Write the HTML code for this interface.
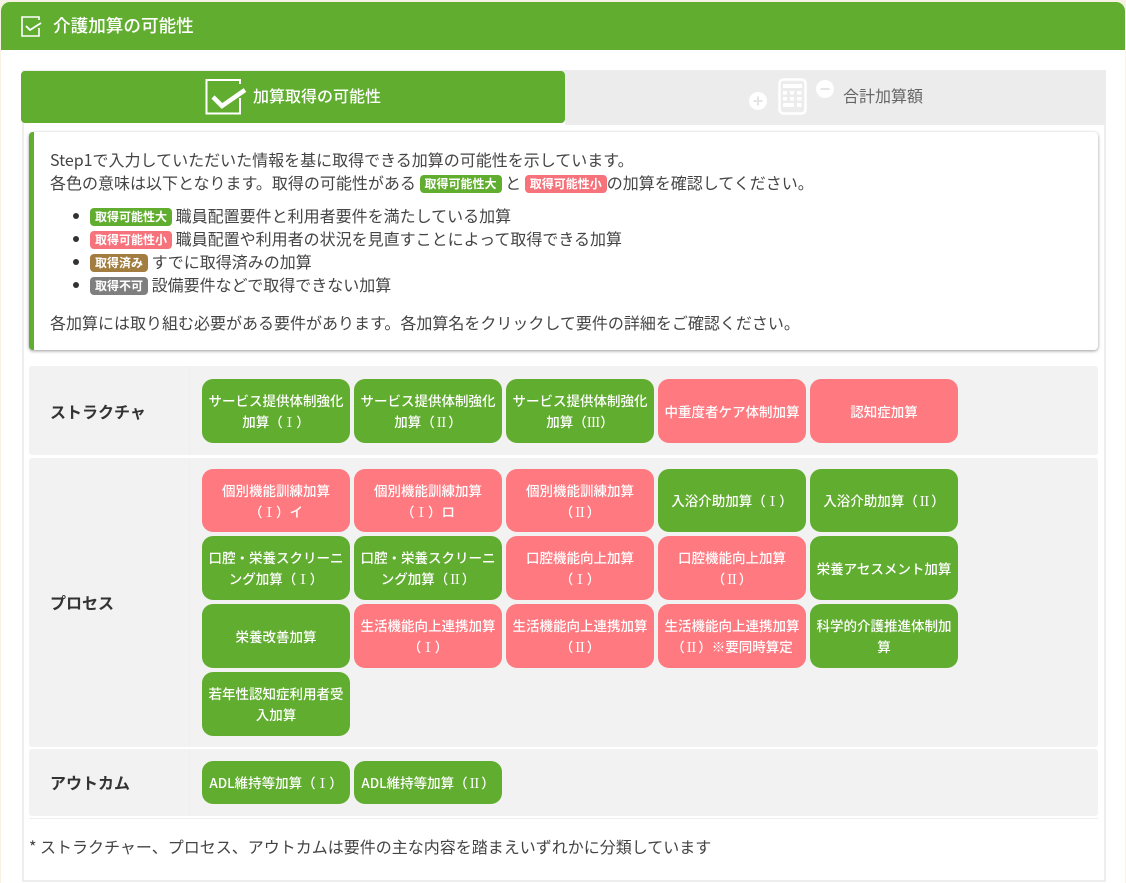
<!DOCTYPE html>
<html lang="ja"><head><meta charset="utf-8"><title>介護加算の可能性</title>
<style>
*{box-sizing:border-box}
html,body{margin:0;padding:0;width:1126px;height:883px;overflow:hidden;background:#f6f2e4}
body{position:relative;font-family:"Noto Sans CJK JP","Liberation Sans",sans-serif;color:#3c3c3c}
.a{position:absolute}
#main{left:1px;top:2px;width:1124px;height:881px;background:#fff;border-radius:9px 9px 0 0}
#hd{left:1px;top:2px;width:1124px;height:48px;background:#61ad30;border-radius:9px 9px 0 0}
#panel{left:22px;top:70px;width:1084px;height:812px;border:2px solid #eee;background:#fff}
.t{position:absolute;white-space:nowrap;font-size:16px;line-height:23px;color:#444}
.row{position:absolute;left:29px;width:1069px;background:#f2f2f2;border-radius:3px}
.row i{position:absolute;left:160px;top:0;bottom:0;width:1px;background:#efefef}
.lb{position:absolute;left:50px;font-size:16px;font-weight:700;color:#333;line-height:24px;white-space:nowrap}
.b{position:absolute;width:148px;border-radius:11px;color:#fff;font-size:13.5px;line-height:21px;display:flex;align-items:center;justify-content:center;text-align:center;padding:0 6px;font-weight:500}
.b span{display:block}
.b s{text-decoration:none;font-family:"Noto Serif CJK SC",serif}
.g{background:#61ad30}.r{background:#ff7981}
.tg{display:inline-block;font-size:12px;font-weight:700;color:#fff;line-height:18px;height:18px;padding:0 5px;border-radius:4px;vertical-align:1px}
.tg.g{background:#61ad30}.tg.r{background:#f6737c}.tg.br{background:#a27d3f}.tg.gy{background:#7f7f7f}
.dot{position:absolute;left:73px;width:6px;height:6px;border-radius:50%;background:#333}
</style></head><body>
<div class="a" id="main"></div>
<div class="a" id="hd"></div>
<svg class="a" style="left:20px;top:15px" width="24" height="24" viewBox="0 0 24 24" fill="none" stroke="#fff" stroke-width="1.6"><path d="M19 13v8H2V2h17v3"/><path d="M6 11l4 4 11-7" stroke-width="1.8"/></svg>
<div class="a" style="left:53px;top:13px;font-size:17.6px;line-height:26px;color:#fff;font-weight:500;white-space:nowrap">介護加算の可能性</div>

<div class="a" id="panel"></div>
<div class="a" style="left:565px;top:70px;width:541px;height:55px;background:#ececec;border-radius:0 4px 4px 0"></div>
<div class="a" style="left:21px;top:71px;width:544px;height:52px;background:#61ad30;border-radius:4px"></div>
<svg class="a" style="left:205px;top:78px" width="42" height="37" viewBox="0 0 42 37" fill="none" stroke="#fff"><path d="M35 20v15.500H1.500V2H35v4" stroke-width="2"/><path d="M8 19l9 9 L40 12" stroke-width="4.500"/></svg>
<div class="a" style="left:253px;top:84px;font-size:16px;line-height:22px;color:#fff;font-weight:500;white-space:nowrap">加算取得の可能性</div>

<svg class="a" style="left:748px;top:78px" width="90" height="38" viewBox="0 0 90 38">
<circle cx="10" cy="23" r="9" fill="#fff"/><path d="M5.500 23h9M10 18.500v9" stroke="#e4e4e4" stroke-width="2"/>
<rect x="31.500" y="1.500" width="26" height="34" rx="4" fill="none" stroke="#fff" stroke-width="2.500"/>
<rect x="35" y="6" width="19" height="4" fill="#fff"/>
<g fill="#fff"><rect x="35" y="13" width="4" height="3.500"/><rect x="42" y="13" width="4" height="3.500"/><rect x="49" y="13" width="4.500" height="3.500"/><rect x="35" y="19" width="4" height="3.500"/><rect x="42" y="19" width="4" height="3.500"/><rect x="49" y="19" width="4.500" height="3.500"/><rect x="35" y="25" width="11" height="4" rx="1"/><rect x="49" y="25" width="4.500" height="4"/></g>
<circle cx="77" cy="11" r="9" fill="#fff"/><path d="M72.500 11h9" stroke="#e4e4e4" stroke-width="2"/>
</svg>
<div class="a" style="left:843px;top:84px;font-size:16px;line-height:22px;color:#666;white-space:nowrap">合計加算額</div>

<div class="a" style="left:29px;top:132px;width:1069px;height:218px;background:#fff;border-left:5px solid #61ad30;border-radius:4px;box-shadow:0 1px 3px rgba(0,0,0,.4)"></div>
<div class="t" style="left:50px;top:148px">Step1で入力していただいた情報を基に取得できる加算の可能性を示しています。</div>
<div class="t" style="left:50px;top:171px">各色の意味は以下となります。取得の可能性がある <span class="tg g">取得可能性大</span> と <span class="tg r">取得可能性小</span>の加算を確認してください。</div>
<div class="dot" style="top:213px"></div><div class="dot" style="top:236px"></div><div class="dot" style="top:259px"></div><div class="dot" style="top:282px"></div>
<div class="t" style="left:90px;top:204px"><span class="tg g">取得可能性大</span> 職員配置要件と利用者要件を満たしている加算</div>
<div class="t" style="left:90px;top:227px"><span class="tg r">取得可能性小</span> 職員配置や利用者の状況を見直すことによって取得できる加算</div>
<div class="t" style="left:90px;top:250px"><span class="tg br">取得済み</span> すでに取得済みの加算</div>
<div class="t" style="left:90px;top:273px"><span class="tg gy">取得不可</span> 設備要件などで取得できない加算</div>
<div class="t" style="left:50px;top:311px">各加算には取り組む必要がある要件があります。各加算名をクリックして要件の詳細をご確認ください。</div>

<div class="row" style="top:366px;height:89px"><i></i></div>
<div class="row" style="top:458px;height:289px"><i></i></div>
<div class="row" style="top:749px;height:67px"><i></i></div>
<div class="a" style="left:29px;top:818px;width:1069px;height:1px;background:#eee"></div>
<div class="lb" style="top:399px">ストラクチャ</div>
<div class="lb" style="top:590px">プロセス</div>
<div class="lb" style="top:770px">アウトカム</div>

<div class="b g" style="left:202px;top:379px;height:64px"><span>サービス提供体制強化加算（<s>Ⅰ</s>）</span></div>
<div class="b g" style="left:354px;top:379px;height:64px"><span>サービス提供体制強化加算（<s>Ⅱ</s>）</span></div>
<div class="b g" style="left:506px;top:379px;height:64px"><span>サービス提供体制強化加算（<s>Ⅲ</s>）</span></div>
<div class="b r" style="left:658px;top:379px;height:64px">中重度者ケア体制加算</div>
<div class="b r" style="left:810px;top:379px;height:64px">認知症加算</div>

<div class="b r" style="left:202px;top:469px;height:63px"><span>個別機能訓練加算<br>（<s>Ⅰ</s>）イ</span></div>
<div class="b r" style="left:354px;top:469px;height:63px"><span>個別機能訓練加算<br>（<s>Ⅰ</s>）ロ</span></div>
<div class="b r" style="left:506px;top:469px;height:63px"><span>個別機能訓練加算<br>（<s>Ⅱ</s>）</span></div>
<div class="b g" style="left:658px;top:469px;height:63px"><span>入浴介助加算（<s>Ⅰ</s>）</span></div>
<div class="b g" style="left:810px;top:469px;height:63px"><span>入浴介助加算（<s>Ⅱ</s>）</span></div>

<div class="b g" style="left:202px;top:536px;height:64px"><span>口腔・栄養スクリーニング加算（<s>Ⅰ</s>）</span></div>
<div class="b g" style="left:354px;top:536px;height:64px"><span>口腔・栄養スクリーニング加算（<s>Ⅱ</s>）</span></div>
<div class="b r" style="left:506px;top:536px;height:64px"><span>口腔機能向上加算<br>（<s>Ⅰ</s>）</span></div>
<div class="b r" style="left:658px;top:536px;height:64px"><span>口腔機能向上加算<br>（<s>Ⅱ</s>）</span></div>
<div class="b g" style="left:810px;top:536px;height:64px">栄養アセスメント加算</div>

<div class="b g" style="left:202px;top:604px;height:64px">栄養改善加算</div>
<div class="b r" style="left:354px;top:604px;height:64px"><span>生活機能向上連携加算<br>（<s>Ⅰ</s>）</span></div>
<div class="b r" style="left:506px;top:604px;height:64px"><span>生活機能向上連携加算<br>（<s>Ⅱ</s>）</span></div>
<div class="b r" style="left:658px;top:604px;height:64px"><span>生活機能向上連携加算<br>（<s>Ⅱ</s>）※要同時算定</span></div>
<div class="b g" style="left:810px;top:604px;height:64px">科学的介護推進体制加算</div>

<div class="b g" style="left:202px;top:672px;height:64px">若年性認知症利用者受入加算</div>

<div class="b g" style="left:202px;top:761px;height:43px"><span>ADL維持等加算（<s>Ⅰ</s>）</span></div>
<div class="b g" style="left:354px;top:761px;height:43px"><span>ADL維持等加算（<s>Ⅱ</s>）</span></div>

<div class="t" style="left:29px;top:835px">* ストラクチャー、プロセス、アウトカムは要件の主な内容を踏まえいずれかに分類しています</div>
</body></html>
